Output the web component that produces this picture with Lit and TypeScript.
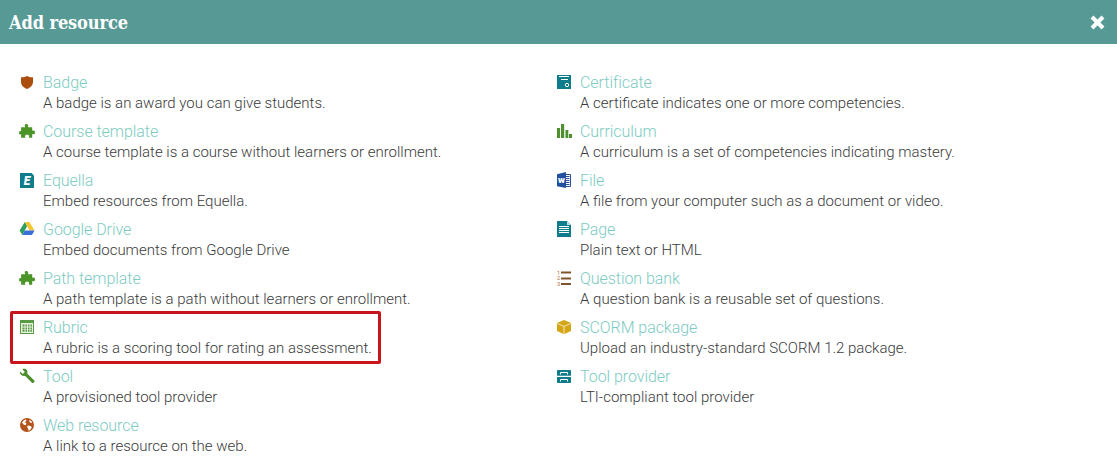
import { LitElement, html, css, svg } from "lit";
import { customElement } from "lit/decorators.js";

const puzzle = svg`<path fill="#4a9428" d="M6.200 1.300c1.700-.9 3.500.3 3 2l-.3 1h4.300v3.500l1-.3c1.400-.3 1.800.8 1.800 1.800 0 1.300-.6 2.300-1.800 2l-1-.3v3.800H9.800l.3-1c.4-1.400-.9-2.300-2-2.300s-2.400.9-2 2.300l.3 1H2.100v-3.700l-.6.300C.4 11.600 0 10.800 0 10c0-1.200.9-2.200 2.100-1.800V4.300h4.300l-.5-1c-.3-.7-.2-1.600.3-2z"/>`;

const icons: Record<string, unknown> = {
  badge: svg`<path fill="#ac4f0e" d="M8 2c1.800 1 3.600 1.300 6 1.200v4.500c0 3.400-2.500 6-6 7.300-3.500-1.300-6-3.900-6-7.300V3.200C4.400 3.300 6.200 3 8 2z"/>`,
  puzzle,
  equella: svg`<path fill="#0f7c8c" d="M1 1h11.500L15 3.500V16H1z"/><text x="8" y="13" text-anchor="middle" font-family="Roboto" font-weight="900" font-style="italic" font-size="12" fill="#fff">E</text>`,
  drive: svg`<path fill="#f7c531" d="M5.800 1h4.600l5.100 8.500h-5z"/><path fill="#2f9f5d" d="M5.800 1 8 5.300 3.400 14 .6 9.500z"/><path fill="#3a6fd8" d="M5.700 9.500h9.800L13 14H3.400z"/>`,
  rubric: svg`<path fill="#5b9a45" d="M1 1h14v14H1z"/><path fill="#e6f1e0" d="M2 4h12v10H2z"/><path fill="#5b9a45" d="M3.500 5.500h2v2h-2zM6.500 5.500h1.500v2H6.500zM9 5.500h1.500v2H9zM11.500 5.500h1.500v2h-1.500zM3.500 8.500h2v2h-2zM6.500 8.500h1.500v2H6.500zM9 8.500h1.500v2H9zM11.500 8.500h1.500v2h-1.500zM3.500 11h2v1.800h-2zM6.500 11h1.500v1.800H6.500zM9 11h1.500v1.800H9zM11.500 11h1.500v1.800h-1.500z"/>`,
  tool: svg`<path fill="#4a8f2b" d="M1.200 3.500 3.800 6l2-2L3.300 1.300C5.200.3 7.400.9 8.200 2.700c.4 1 .4 1.900 0 2.800l6.800 6.700c.7.700.7 1.600 0 2.300s-1.700.6-2.300-.1L6 7.700c-1 .4-2 .3-2.900-.1C1.400 6.800.7 5.300 1.200 3.500z"/>`,
  web: svg`<circle cx="8" cy="8" r="7" fill="#b4541a"/><path fill="#fff" d="M3 5.500c1-1.500 2.200-2.400 3.500-2.900l1 1.200-1.400 1.400 1.500 1.600-1.100 1.500-2-.9-.9-1.200zM8.800 8.500l3 .6 1 1.300-1.700 2.500-1.500.8-.6-2.500-1-1.200zM10 2.800l2.500 1.500.6 1.700-2.300-.4z"/>`,
  cert: svg`<path fill="#0f7c8c" d="M1 1h14v14H1z"/><path fill="#fff" d="M3 2h10v1H3zM5 5h7v1H5z"/><circle cx="11" cy="11" r="1.700" fill="none" stroke="#fff" stroke-width="1"/>`,
  bars: svg`<path fill="#4f8f2f" d="M1 5h3v10H1zM5 1h3.200v14H5zM9.500 7h2.800v8H9.500zM13 11h3v4h-3z"/>`,
  word: svg`<path fill="#fff" stroke="#2a4f9a" stroke-width="1" d="M8 2.500h6.500v12H8z"/><path fill="#2a4f9a" d="M10 4h3.500v1H10zM10 6h3.500v1H10zM10 8h3.500v1H10zM10 10h3.500v1H10zM10 12h3.500v1H10z"/><path fill="#22509f" d="M1 2.300 10 0v16l-9-1.800z"/><text x="5.400" y="11.200" text-anchor="middle" font-family="Roboto" font-weight="900" font-size="8" fill="#fff">W</text>`,
  page: svg`<path fill="#0f7c8c" d="M1 0h10l4 4v12H1z"/><path fill="#bfe0e3" d="M11 0l4 4h-4z"/><path fill="#fff" d="M3 5h10v1H3zM3 7h10v1H3zM3 9h10v1H3zM3 11h10v1H3z"/>`,
  list: svg`<path fill="#80552a" d="M5 1.500h10v2H5zM5 7.500h10v2H5zM5 13h10v2H5z"/><text x="2.500" y="5" text-anchor="middle" font-family="Roboto" font-size="5.500" font-weight="400" fill="#b0692c">1</text><text x="2.500" y="10.200" text-anchor="middle" font-family="Roboto" font-size="5.500" font-weight="400" fill="#b0692c">2</text><text x="2.500" y="15.500" text-anchor="middle" font-family="Roboto" font-size="5.500" font-weight="400" fill="#b0692c">3</text>`,
  box: svg`<path fill="#d4a514" d="M8 1 15 4v8l-7 3.200L1 12V4z"/><path fill="none" stroke="#f6e9b8" stroke-width="1" d="M1.500 4.500 8 7.500l6.500-3M8 7.500V15"/>`,
  provider: svg`<path fill="#0f7c8c" d="M1 3c0-.6.500-1 1-1h12c.5 0 1 .4 1 1v4.800H1zM1 9h14v5c0 .6-.5 1-1 1H2c-.5 0-1-.4-1-1z"/><path fill="none" stroke="#fff" stroke-width="1" d="M4.500 6.500V4.500h7v2M4.500 13.500v-2h7v2"/>`,
};

type Item = [string, string, string];
const left: Item[] = [
  ["badge", "Badge", "A badge is an award you can give students."],
  ["puzzle", "Course template", "A course template is a course without learners or enrollment."],
  ["equella", "Equella", "Embed resources from Equella."],
  ["drive", "Google Drive", "Embed documents from Google Drive"],
  ["puzzle", "Path template", "A path template is a path without learners or enrollment."],
  ["rubric", "Rubric", "A rubric is a scoring tool for rating an assessment."],
  ["tool", "Tool", "A provisioned tool provider"],
  ["web", "Web resource", "A link to a resource on the web."],
];
const right: Item[] = [
  ["cert", "Certificate", "A certificate indicates one or more competencies."],
  ["bars", "Curriculum", "A curriculum is a set of competencies indicating mastery."],
  ["word", "File", "A file from your computer such as a document or video."],
  ["page", "Page", "Plain text or HTML"],
  ["list", "Question bank", "A question bank is a reusable set of questions."],
  ["box", "SCORM package", "Upload an industry-standard SCORM 1.2 package."],
  ["provider", "Tool provider", "LTI-compliant tool provider"],
];

@customElement("app-root")
export class AppRoot extends LitElement {
  static styles = css`
    :host {
      display: block;
      position: relative;
      width: 1117px;
      height: 468px;
      overflow: hidden;
      background: #fff;
      font-family: Roboto, sans-serif;
      font-weight: 300;
    }
    .header {
      height: 44px;
      background: #579a95;
      display: flex;
      align-items: center;
      justify-content: space-between;
      padding: 0 12px 0 9px;
      box-sizing: border-box;
    }
    .title {
      font-family: "DejaVu Serif", serif;
      font-weight: 700;
      font-size: 18px;
      font-stretch: condensed;
      letter-spacing: -0.1px;
      color: #fff;
    }
    .close { width: 15px; height: 15px; display: block; }
    .cols {
      display: grid;
      grid-template-columns: 537px 1fr;
      padding: 29px 0 0 19px;
    }
    .item {
      display: grid;
      grid-template-columns: 24px 1fr;
      height: 49px;
    }
    .icon { width: 16px; height: 16px; display: block; margin-top: 1px; }
    .name {
      font-size: 16px;
      line-height: 20px;
      letter-spacing: -0.05px;
      color: #7dcbc2;
    }
    .desc {
      font-size: 15px;
      line-height: 20px;
      color: #3a3a3a;
    }
    .highlight {
      position: absolute;
      left: 10px;
      top: 311px;
      width: 371px;
      height: 53px;
      box-sizing: border-box;
      border: 3px solid #c8141c;
      border-radius: 2px;
    }
  `;

  private col(items: Item[]) {
    return html`<div>
      ${items.map(
        ([i, n, d]) => html`<div class="item">
          <svg class="icon" viewBox="0 0 16 16">${icons[i]}</svg>
          <div><div class="name">${n}</div><div class="desc">${d}</div></div>
        </div>`
      )}
    </div>`;
  }

  render() {
    return html`
      <div class="header">
        <span class="title">Add resource</span>
        <svg class="close" viewBox="0 0 15 15"><path fill="none" stroke="#fff" stroke-width="4" d="M2 2l11 11M13 2 2 13"/></svg>
      </div>
      <div class="cols">${this.col(left)}${this.col(right)}</div>
      <div class="highlight"></div>
    `;
  }
}
